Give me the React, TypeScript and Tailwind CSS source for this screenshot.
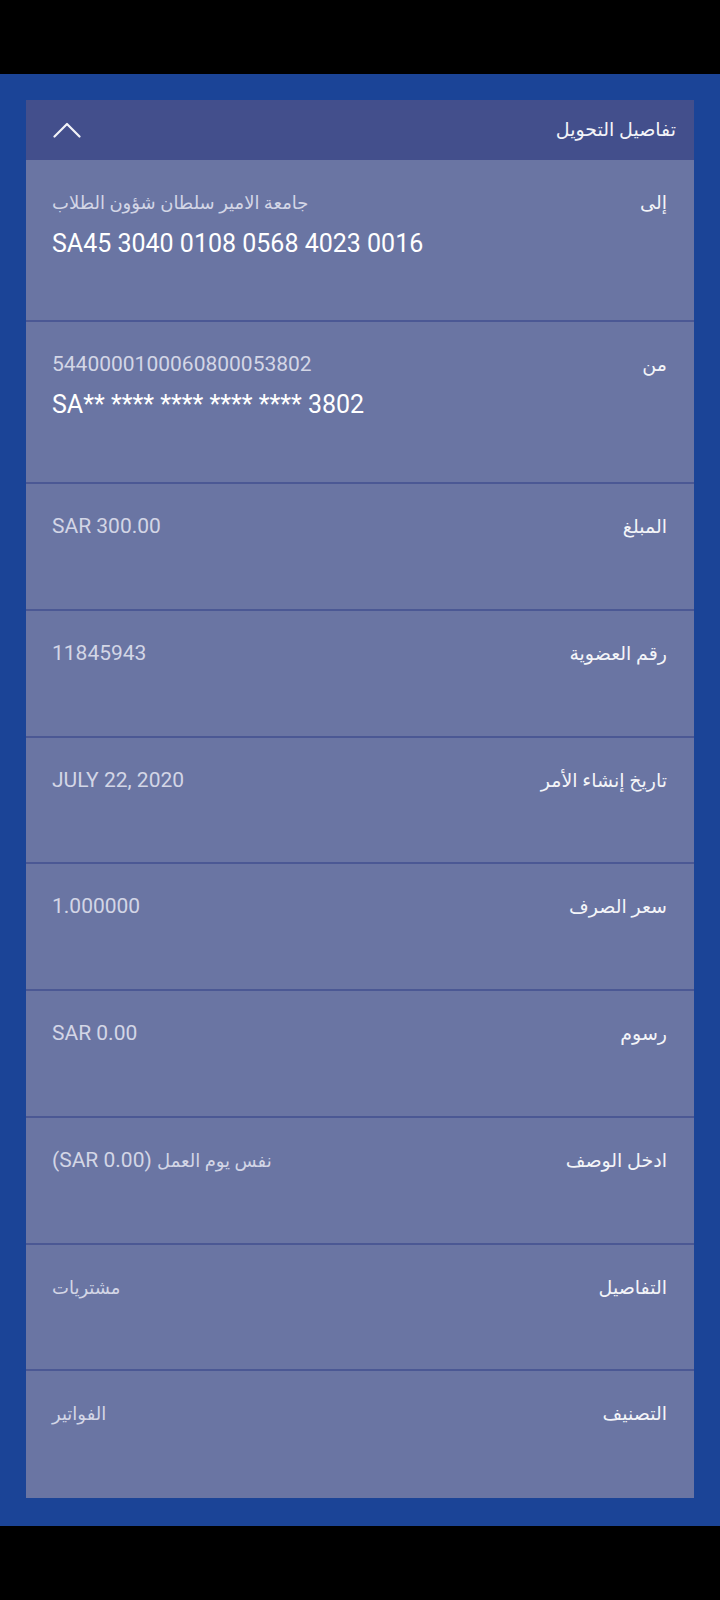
import React from "react";

type Line = { node: React.ReactNode; big?: boolean; rtl?: boolean };
type Row = { label: string; lines: Line[]; tall?: boolean };

const ar = (t: string) => <span className="text-[18px]">{t}</span>;

const rows: Row[] = [
  {
    label: "إلى",
    tall: true,
    lines: [
      { node: ar("جامعة الامير سلطان شؤون الطلاب"), rtl: true },
      { node: "SA45 3040 0108 0568 4023 0016", big: true },
    ],
  },
  {
    label: "من",
    tall: true,
    lines: [
      { node: "5440000100060800053802" },
      { node: "SA** **** **** **** **** 3802", big: true },
    ],
  },
  { label: "المبلغ", lines: [{ node: "SAR 300.00" }] },
  { label: "رقم العضوية", lines: [{ node: "11845943" }] },
  { label: "تاريخ إنشاء الأمر", lines: [{ node: "JULY 22, 2020" }] },
  { label: "سعر الصرف", lines: [{ node: "1.000000" }] },
  { label: "رسوم", lines: [{ node: "SAR 0.00" }] },
  {
    label: "ادخل الوصف",
    lines: [
      {
        node: (
          <>
            {ar("نفس يوم العمل")} (SAR 0.00)
          </>
        ),
        rtl: true,
      },
    ],
  },
  { label: "التفاصيل", lines: [{ node: ar("مشتريات"), rtl: true }] },
  { label: "التصنيف", lines: [{ node: ar("الفواتير"), rtl: true }] },
];

export default function App() {
  return (
    <div
      className="w-[720px] h-[1600px] bg-black flex flex-col"
      style={{ fontFamily: "Roboto, 'DejaVu Sans', sans-serif" }}
    >
      <div className="h-[74px] shrink-0 bg-black" />
      <div className="h-[1452px] shrink-0 bg-[#1b4497] px-[26px] pt-[26px]">
        <div className="w-[668px] flex flex-col">
          <div className="h-[60px] bg-[#434f8c] flex items-center justify-between pl-[27px] pr-[18px]">
            <svg width="28" height="16" viewBox="0 0 28 16" fill="none">
              <path d="M1.5 14.5 L14 2 L26.5 14.5" stroke="#f2f3f8" strokeWidth="2.2" strokeLinecap="round" strokeLinejoin="round" />
            </svg>
            <span dir="rtl" className="text-[19px] leading-[26px] text-[#f3f4f8]">
              تفاصيل التحويل
            </span>
          </div>
          {rows.map((r, i) => {
            const last = i === rows.length - 1;
            return (
              <div
                key={i}
                className={
                  "shrink-0 bg-[#6a75a3] flex justify-between pl-[26px] pr-[27px] pt-[29px] " +
                  (r.tall ? "h-[162px] " : "h-[126.75px] ") +
                  (last ? "" : "border-b-2 border-[#4b5894]")
                }
              >
                <div className="flex flex-col items-start">
                  {r.lines.map((l, j) => (
                    <div
                      key={j}
                      dir={l.rtl ? "rtl" : "ltr"}
                      className={
                        l.big
                          ? "mt-[14px] text-[25px] leading-[28px] text-white whitespace-nowrap"
                          : "text-[21px] leading-[26px] text-[#d3d6e6] whitespace-nowrap"
                      }
                    >
                      {l.node}
                    </div>
                  ))}
                </div>
                <div dir="rtl" className="text-[19px] leading-[28px] text-[#f3f4f8] whitespace-nowrap">
                  {r.label}
                </div>
              </div>
            );
          })}
        </div>
      </div>
      <div className="flex-1 bg-black" />
    </div>
  );
}
